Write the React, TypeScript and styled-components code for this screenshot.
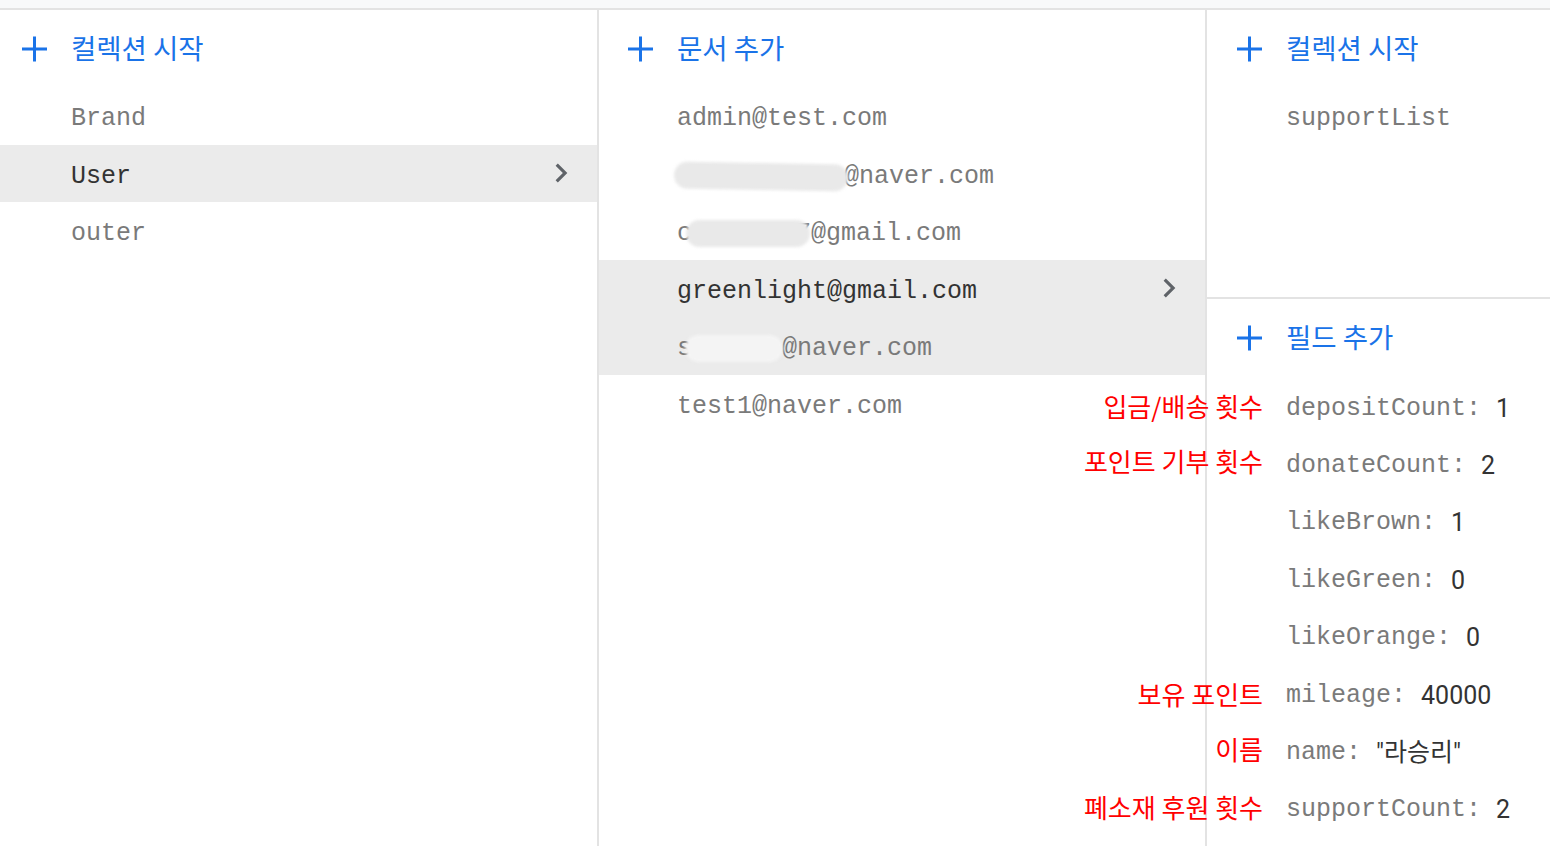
import React from "react";
import styled, { createGlobalStyle } from "styled-components";

const GlobalStyle = createGlobalStyle`
  html, body { margin: 0; padding: 0; background: #ffffff; }
  body { font-family: "Roboto", "Noto Sans CJK KR", sans-serif; }
  * { box-sizing: border-box; }
`;

const Page = styled.div`
  width: 1550px;
  height: 846px;
  display: flex;
  flex-direction: column;
  overflow: hidden;
  background: #ffffff;
`;

const TopStrip = styled.div`
  height: 10px;
  flex: none;
  background: #f8f9fa;
  border-bottom: 2px solid #e3e3e3;
`;

const Columns = styled.div`
  flex: 1;
  display: grid;
  grid-template-columns: 599px 608px 1fr;
  min-height: 0;
`;

const Panel = styled.div<{ $last?: boolean }>`
  display: flex;
  flex-direction: column;
  border-right: ${(p) => (p.$last ? "none" : "2px solid #e3e3e3")};
  position: relative;
`;

const AddButton = styled.div<{ $pad: number; $h?: number }>`
  height: ${(p) => p.$h ?? 77}px;
  flex: none;
  display: flex;
  align-items: center;
  gap: 24px;
  padding-left: ${(p) => p.$pad}px;
  color: #1a73e8;
  font-family: "Noto Sans CJK KR", "Roboto", sans-serif;
  font-size: 27.5px;
  font-weight: 400;
`;

const AddLabel = styled.span`
  position: relative;
  top: -2px;
`;

const PlusIcon = () => (
  <svg width="25" height="26" viewBox="0 0 25 26" aria-hidden>
    <path d="M12.5 0.5V25.5M0 13H25" stroke="#1a73e8" strokeWidth="3" fill="none" />
  </svg>
);

const ItemRow = styled.div<{ $pad: number; $active?: boolean; $selected?: boolean }>`
  height: 57.5px;
  flex: none;
  display: flex;
  align-items: center;
  padding-left: ${(p) => p.$pad}px;
  padding-right: 17px;
  background: ${(p) => (p.$active ? "#ebebeb" : "transparent")};
  color: ${(p) => (p.$selected ? "#333333" : "#7a7a7a")};
  font-family: "Liberation Mono", "DejaVu Sans Mono", monospace;
  font-size: 25px;
  white-space: nowrap;
`;

const ItemText = styled.span`
  flex: 1;
  display: flex;
  align-items: center;
  position: relative;
  top: 3px;
`;

const Chevron = () => (
  <svg width="38" height="38" viewBox="0 0 24 24" aria-hidden>
    <path d="M10 6L8.59 7.41 13.17 12l-4.58 4.59L10 18l6-6z" fill="#5f6368" />
  </svg>
);

const Blob = styled.span<{ $w: number; $ml?: number; $mr?: number; $tilt?: number; $onGray?: boolean }>`
  display: inline-block;
  position: relative;
  z-index: 1;
  width: ${(p) => p.$w}px;
  height: 27px;
  margin-left: ${(p) => p.$ml ?? 0}px;
  margin-right: ${(p) => p.$mr ?? 0}px;
  border-radius: 14px;
  background: ${(p) => (p.$onGray ? "#f4f4f4" : "#e9e9e9")};
  filter: blur(1.6px);
  transform: rotate(${(p) => p.$tilt ?? 0}deg);
`;

const TopSection = styled.div`
  height: 289px;
  flex: none;
  border-bottom: 2px solid #e3e3e3;
  display: flex;
  flex-direction: column;
`;

const FieldRow = styled.div`
  position: relative;
  height: 57.4px;
  flex: none;
  display: flex;
  align-items: center;
  padding-left: 79px;
  white-space: nowrap;
`;

const FieldText = styled.span`
  position: relative;
  top: 3px;
  display: flex;
  align-items: center;
`;

const FieldKey = styled.span`
  display: block;
  line-height: 30px;
  color: #7a7a7a;
  font-family: "Liberation Mono", "DejaVu Sans Mono", monospace;
  font-size: 25px;
`;

const FieldValue = styled.span`
  display: block;
  line-height: 30px;
  margin-left: 15px;
  color: #333333;
  font-family: "Roboto", "Noto Sans CJK KR", sans-serif;
  font-size: 25px;
`;

const Note = styled.span<{ $dy?: number }>`
  position: absolute;
  right: calc(100% - 56px);
  top: 50%;
  transform: translateY(calc(-50% + ${(p) => p.$dy ?? 0}px));
  color: #ff0000;
  font-family: "Noto Sans CJK KR", sans-serif;
  font-size: 26px;
  line-height: 1;
  white-space: nowrap;
  z-index: 2;
`;

const collections = ["Brand", "User", "outer"];

type Field = { key: string; value: string; note?: string; dy?: number };

const fields: Field[] = [
  { key: "depositCount:", value: "1", note: "입금/배송 횟수", dy: 0 },
  { key: "donateCount:", value: "2", note: "포인트 기부 횟수", dy: -2 },
  { key: "likeBrown:", value: "1" },
  { key: "likeGreen:", value: "0" },
  { key: "likeOrange:", value: "0" },
  { key: "mileage:", value: "40000", note: "보유 포인트", dy: 1 },
  { key: "name:", value: "\"라승리\"", note: "이름", dy: -1 },
  { key: "supportCount:", value: "2", note: "폐소재 후원 횟수", dy: 0 },
];

export default function App() {
  return (
    <Page>
      <GlobalStyle />
      <TopStrip />
      <Columns>
        <Panel>
          <AddButton $pad={22}>
            <PlusIcon />
            <AddLabel>컬렉션 시작</AddLabel>
          </AddButton>
          {collections.map((c) => (
            <ItemRow key={c} $pad={71} $active={c === "User"} $selected={c === "User"}>
              <ItemText>{c}</ItemText>
              {c === "User" && <Chevron />}
            </ItemRow>
          ))}
        </Panel>

        <Panel>
          <AddButton $pad={29}>
            <PlusIcon />
            <AddLabel>문서 추가</AddLabel>
          </AddButton>
          <ItemRow $pad={78}>
            <ItemText>admin@test.com</ItemText>
          </ItemRow>
          <ItemRow $pad={78}>
            <ItemText>
              <Blob $w={174} $ml={-3} $mr={-4} $tilt={1} />
              @naver.com
            </ItemText>
          </ItemRow>
          <ItemRow $pad={78}>
            <ItemText>
              c
              <Blob $w={124} $ml={-6} $mr={-14} />
              7@gmail.com
            </ItemText>
          </ItemRow>
          <ItemRow $pad={78} $active $selected>
            <ItemText>greenlight@gmail.com</ItemText>
            <Chevron />
          </ItemRow>
          <ItemRow $pad={78} $active>
            <ItemText>
              s
              <Blob $w={98} $ml={-7} $mr={-1} $onGray />
              @naver.com
            </ItemText>
          </ItemRow>
          <ItemRow $pad={78}>
            <ItemText>test1@naver.com</ItemText>
          </ItemRow>
        </Panel>

        <Panel $last>
          <TopSection>
            <AddButton $pad={30}>
              <PlusIcon />
              <AddLabel>컬렉션 시작</AddLabel>
            </AddButton>
            <ItemRow $pad={79}>
              <ItemText>supportList</ItemText>
            </ItemRow>
          </TopSection>
          <AddButton $pad={30} $h={78}>
            <PlusIcon />
            <AddLabel>필드 추가</AddLabel>
          </AddButton>
          {fields.map((f) => (
            <FieldRow key={f.key}>
              {f.note && <Note $dy={f.dy}>{f.note}</Note>}
              <FieldText>
                <FieldKey>{f.key}</FieldKey>
                <FieldValue>{f.value}</FieldValue>
              </FieldText>
            </FieldRow>
          ))}
        </Panel>
      </Columns>
    </Page>
  );
}
